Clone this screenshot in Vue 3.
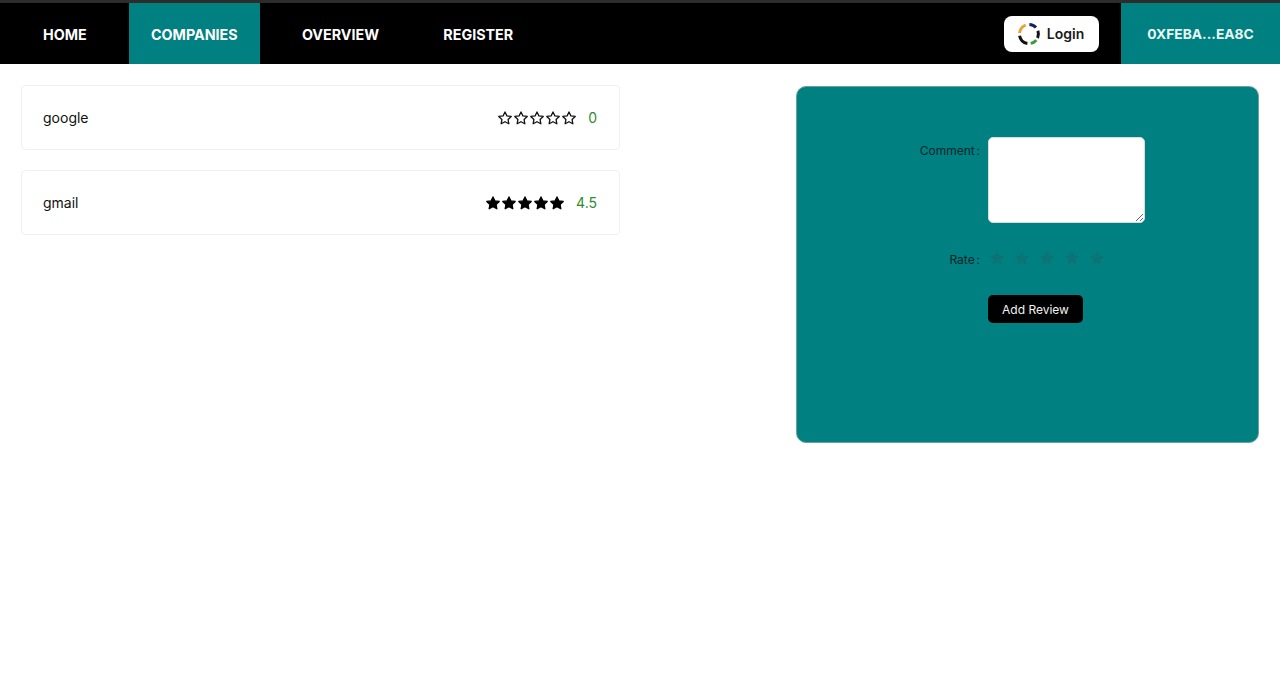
<template>
  <div class="page">
    <div class="topline"></div>
    <nav class="navbar">
      <div class="nav-links">
        <a v-for="link in links" :key="link" class="nav-link" :class="{ active: link === 'COMPANIES' }">{{ link }}</a>
      </div>
      <div class="nav-right">
        <button class="login-btn">
          <svg class="login-logo" width="24" height="24" viewBox="0 0 24 24" fill="none" stroke-width="3">
            <path d="M2.6 11.2 A9.5 9.5 0 0 1 8.7 3.1" stroke="#e8a33d" />
            <path d="M12.4 2.5 A9.5 9.5 0 0 1 19 5.6" stroke="#1a1f5a" />
            <path d="M20.9 8.8 A9.5 9.5 0 0 1 20.6 16" stroke="#111122" />
            <path d="M19.3 18.1 A9.5 9.5 0 0 1 13.7 21.4" stroke="#3f9a3a" />
            <path d="M10.4 21.4 A9.5 9.5 0 0 1 2.6 13.7" stroke="#111111" />
          </svg>
          <span>Login</span>
        </button>
        <div class="wallet">0XFEBA...EA8C</div>
      </div>
    </nav>

    <main class="content">
      <section class="company-list">
        <div v-for="company in companies" :key="company.name" class="company-card">
          <span class="company-name">{{ company.name }}</span>
          <div class="company-rating">
            <div class="stars">
              <svg v-for="n in 5" :key="n" width="16" height="16" viewBox="-0.5 -0.5 25 25" class="star" :class="{ filled: company.filled }">
                <path :d="starPath" />
              </svg>
            </div>
            <span class="score">{{ company.score }}</span>
          </div>
        </div>
      </section>

      <section class="review-panel">
        <form class="review-form" @submit.prevent>
          <label class="form-label comment-label">Comment :</label>
          <textarea class="comment-input"></textarea>
          <label class="form-label rate-label">Rate :</label>
          <div class="rate-stars">
            <svg v-for="n in 5" :key="n" width="18" height="18" viewBox="0 0 24 24">
              <path :d="starPath" />
            </svg>
          </div>
          <span></span>
          <div><button class="add-btn">Add Review</button></div>
        </form>
      </section>
    </main>
  </div>
</template>

<script setup>
const links = ['HOME', 'COMPANIES', 'OVERVIEW', 'REGISTER']

const companies = [
  { name: 'google', score: '0', filled: false },
  { name: 'gmail', score: '4.5', filled: true }
]

const starPath = 'M12 2.5l2.95 6.2 6.8.9-4.97 4.7 1.25 6.75L12 17.8l-6.03 3.25 1.25-6.75L2.25 9.6l6.8-.9z'
</script>

<style>
html, body {
  margin: 0;
  background: #ffffff;
}
</style>

<style scoped>
.page {
  min-height: 699px;
  font-family: Inter, "Liberation Sans", sans-serif;
  color: #111111;
  background: #ffffff;
}

.topline {
  height: 3px;
  background: #2c2c2c;
}

.navbar {
  height: 61px;
  background: #000000;
  display: flex;
  justify-content: space-between;
}

.nav-links {
  display: flex;
  padding-left: 21px;
  gap: 20.3px;
}

.nav-link {
  display: flex;
  align-items: center;
  padding: 1px 22px 0;
  color: #ffffff;
  font-size: 14.3px;
  font-weight: 700;
}

.nav-link.active {
  background: #008080;
}

.nav-right {
  display: flex;
  align-items: center;
  gap: 22px;
}

.login-btn {
  width: 95px;
  height: 36px;
  display: flex;
  align-items: center;
  justify-content: center;
  gap: 6px;
  padding: 0 2px 0 0;
  border: none;
  border-radius: 8px;
  background: #ffffff;
  color: #1a1a1a;
  font-family: inherit;
  font-size: 14px;
  font-weight: 600;
}

.wallet {
  width: 159px;
  height: 100%;
  display: flex;
  align-items: center;
  justify-content: center;
  padding-top: 1px;
  box-sizing: border-box;
  background: #008080;
  color: #e8f6f6;
  font-size: 13.8px;
  font-weight: 700;
}

.content {
  display: flex;
  justify-content: space-between;
  align-items: flex-start;
  padding: 21px 21px 0;
}

.company-list {
  width: 599px;
  display: flex;
  flex-direction: column;
  gap: 20px;
}

.company-card {
  height: 65px;
  box-sizing: border-box;
  display: flex;
  align-items: center;
  justify-content: space-between;
  padding: 0 22px 0 21px;
  border: 1px solid #f1f1f1;
  border-radius: 4px;
  background: #ffffff;
  font-size: 14px;
}

.company-rating {
  display: flex;
  align-items: center;
  gap: 11px;
}

.stars {
  display: flex;
}

.star path {
  fill: none;
  stroke: #111111;
  stroke-width: 2;
  stroke-linejoin: round;
}

.star.filled path {
  fill: #000000;
  stroke: #000000;
}

.score {
  color: #2e8b2e;
  font-size: 14px;
}

.review-panel {
  width: 463px;
  height: 357px;
  box-sizing: border-box;
  margin-top: 1px;
  padding-top: 50px;
  border: 1px solid #6f9f9f;
  border-radius: 10px;
  background: #008080;
}

.review-form {
  display: grid;
  grid-template-columns: 183px auto;
  column-gap: 8px;
  row-gap: 22px;
  justify-content: start;
  align-items: start;
}

.form-label {
  text-align: right;
  font-size: 12px;
  word-spacing: -1.5px;
  color: #05262b;
}

.comment-label {
  padding-top: 6px;
}

.rate-label {
  padding-top: 7px;
}

.comment-input {
  display: block;
  width: 157px;
  height: 86px;
  box-sizing: border-box;
  margin: 0;
  border: 1px solid #d8dede;
  border-radius: 5px;
  background: #ffffff;
}

.rate-stars {
  display: flex;
  gap: 7px;
  height: 24px;
  margin-top: 4px;
}

.rate-stars path {
  fill: #0b7477;
}

.add-btn {
  width: 95px;
  height: 28px;
  padding: 0;
  border: none;
  border-radius: 5px;
  background: #000000;
  color: #f2f2f2;
  font-family: inherit;
  font-size: 12px;
}
</style>
